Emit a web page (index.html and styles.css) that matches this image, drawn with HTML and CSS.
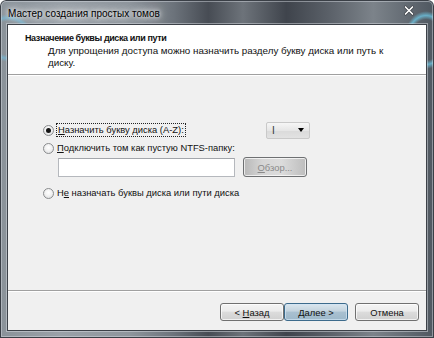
FILE: index.html
```html
<!DOCTYPE html>
<html lang="ru">
<head>
<meta charset="utf-8">
<title>Мастер создания простых томов</title>
<link rel="stylesheet" href="styles.css">
</head>
<body>
<div class="window">
  <div class="titlebar">
    <span class="title">Мастер создания простых томов</span>
    <svg class="close" width="12" height="11" viewBox="0 0 12 11">
      <path d="M2.5 2 L9.5 9 M9.5 2 L2.5 9" stroke="#3a3e44" stroke-width="3" stroke-linecap="round"/>
      <path d="M2.5 2 L9.5 9 M9.5 2 L2.5 9" stroke="#ffffff" stroke-width="1.7" stroke-linecap="round"/>
    </svg>
  </div>
  <div class="client">
    <div class="header">
      <div class="h-title">Назначение буквы диска или пути</div>
      <div class="h-sub">Для упрощения доступа можно назначить разделу букву диска или путь к<br>диску.</div>
    </div>
    <div class="sep"></div>
    <div class="body">
      <div class="options">
        <div class="row">
          <div class="opt opt-first">
            <span class="radio checked"></span>
            <span class="focus-box"><u>Н</u>азначить букву диска (A-Z):</span>
          </div>
          <div class="combo"><span class="combo-val">I</span><span class="arrow"></span></div>
        </div>
        <div class="row">
          <div class="opt">
            <span class="radio"></span>
            <span class="lbl"><u>П</u>одключить том как пустую NTFS-папку:</span>
          </div>
        </div>
        <div class="path-row">
          <div class="textbox"></div>
          <div class="btn disabled"><span><u>О</u>бзор...</span></div>
        </div>
        <div class="row row-last">
          <div class="opt">
            <span class="radio"></span>
            <span class="lbl">Н<u>е</u> назначать буквы диска или пути диска</span>
          </div>
        </div>
      </div>
    </div>
    <div class="sep"></div>
    <div class="footer">
      <div class="pair">
        <div class="btn"><span>&lt; <u>Н</u>азад</span></div>
        <div class="btn default"><span><u>Д</u>алее &gt;</span></div>
      </div>
      <div class="btn"><span>Отмена</span></div>
    </div>
  </div>
</div>
</body>
</html>
```

FILE: styles.css
```css
* { box-sizing: border-box; }
html, body { margin: 0; padding: 0; }
body {
  width: 434px;
  height: 338px;
  overflow: hidden;
  font-family: "Liberation Sans", Arial, sans-serif;
  font-size: 9.4px;
  color: #111;
}
.window {
  width: 434px;
  height: 338px;
  display: flex;
  flex-direction: column;
  background:
    radial-gradient(ellipse 26px 34px at 426px 40px, rgba(0,0,0,0) 60%, rgba(110,200,230,0.75) 72%, rgba(0,0,0,0) 85%),
    radial-gradient(ellipse 30px 28px at 8px 38px, rgba(0,0,0,0) 60%, rgba(110,190,225,0.6) 72%, rgba(0,0,0,0) 85%),
    linear-gradient(90deg, #8a9299 0%, #9aa1a8 14%, #8e959c 30%, #6c737b 40%, #474c54 48%, #6d737a 56%, #3f444c 66%, #5b6169 76%, #7c838a 86%, #4f5760 100%);
  box-shadow: inset 0 0 0 1px #3a3f46, inset 0 0 0 2px rgba(220,225,230,0.45);
  border-radius: 6px 6px 0 0;
}
.titlebar {
  height: 24px;
  flex: none;
  display: flex;
  align-items: center;
  padding: 2px 0 0 8px;
}
.title {
  font-size: 10px;
  color: #000;
  text-shadow: 0 0 4px #fff, 0 0 8px rgba(255,255,255,0.9), 0 0 12px rgba(255,255,255,0.7);
}
.close {
  margin-left: auto;
  margin-right: 19px;
  margin-top: -6px;
}
.client {
  flex: 1;
  margin: 0 7px 7px 7px;
  border: 1px solid #3c4148;
  box-shadow: 0 0 0 1px rgba(215,220,225,0.5);
  display: flex;
  flex-direction: column;
  background: #f0f0f0;
}
.header {
  height: 49px;
  flex: none;
  background: #fff;
  padding: 7px 0 0 17px;
}
.h-title {
  font-weight: bold;
  font-size: 9px;
  letter-spacing: -0.4px;
  line-height: 13px;
}
.h-sub {
  font-size: 9.8px;
  line-height: 12px;
  padding-left: 23px;
}
.sep {
  height: 2px;
  flex: none;
  border-top: 1px solid #a0a0a0;
  border-bottom: 1px solid #ffffff;
}
.body {
  flex: 1;
  padding: 45px 0 0 35px;
}
.options {
  display: flex;
  flex-direction: column;
}
.row {
  height: 18px;
  display: flex;
  align-items: center;
}
.row-last { margin-top: 7px; }
.opt {
  display: flex;
  align-items: center;
}
.opt-first { width: 223px; }
.radio {
  width: 11px;
  height: 11px;
  border-radius: 50%;
  border: 1px solid #8a8c8e;
  background: radial-gradient(circle at 50% 40%, #ffffff 0%, #f2f2f2 45%, #d6d8da 100%);
  margin-right: 3px;
  display: flex;
  align-items: center;
  justify-content: center;
}
.radio.checked::after {
  content: "";
  width: 5px;
  height: 5px;
  border-radius: 50%;
  background: #151515;
}
.focus-box {
  border: 1px dotted #222;
  padding: 0 1px;
  margin-left: -1px;
  line-height: 12px;
}
.lbl { line-height: 12px; }
.combo {
  width: 44px;
  height: 17px;
  border: 1px solid #c9c9c9;
  border-radius: 2px;
  background: linear-gradient(#f6f6f6, #e6e6e6 50%, #dadada 51%, #e2e2e2);
  display: flex;
  align-items: center;
  padding: 0 5px 0 5px;
}
.combo-val { font-size: 10px; color: #333; }
.arrow {
  margin-left: auto;
  width: 0;
  height: 0;
  border-left: 3.5px solid transparent;
  border-right: 3.5px solid transparent;
  border-top: 4px solid #000;
}
.path-row {
  display: flex;
  align-items: center;
  gap: 8px;
  padding-left: 15px;
  height: 20px;
}
.textbox {
  width: 177px;
  height: 19px;
  background: #fff;
  border: 1px solid #b5b8bd;
  border-top-color: #a2a5aa;
}
.btn {
  width: 64px;
  height: 18px;
  border: 1px solid #707070;
  border-radius: 3px;
  background: linear-gradient(#f4f4f4 0%, #ececec 45%, #dcdcdc 50%, #d0d0d0 100%);
  box-shadow: inset 0 0 0 1px rgba(255,255,255,0.7);
  display: flex;
  align-items: center;
  justify-content: center;
  font-size: 9.4px;
  color: #111;
}
.btn.disabled {
  height: 20px;
  border-color: #6e7072;
  background: linear-gradient(90deg, #b8b8b8 0%, #d6d6d6 30%, #dcdcdc 60%, #bdbdbd 100%);
  color: #8a8a8a;
}
.btn.default {
  border-color: #3d6b8c;
  background: linear-gradient(#dbe6ee 0%, #c3d3de 45%, #a9c0d0 50%, #9db8ca 100%);
  box-shadow: inset 0 0 0 1px rgba(210,230,245,0.7);
}
.footer {
  flex: none;
  height: 38px;
  display: flex;
  justify-content: flex-end;
  align-items: flex-start;
  padding: 11px 7px 0 0;
  gap: 7px;
}
.pair { display: flex; }
u { text-decoration: underline; text-underline-offset: 1px; }
```
